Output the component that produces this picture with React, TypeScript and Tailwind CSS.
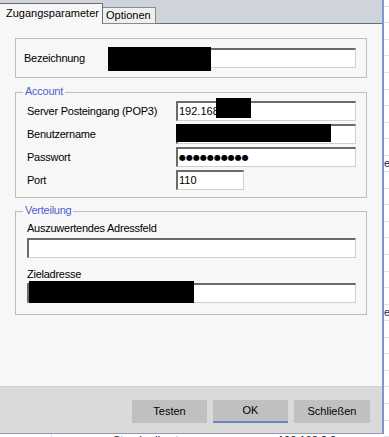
const inputCls =
  'relative flex items-center h-[20px] bg-white border-t-2 border-l-2 border-t-[#6b6b6b] border-l-[#6b6b6b] border-r border-b border-r-[#d4d0c8] border-b-[#d4d0c8] pl-[1px] leading-none tracking-normal';

const Legend = ({ children }: { children: string }) => (
  <div className="absolute left-[7px] -top-[8px] px-[2px] bg-[#f7f7f7] text-[#4c5fd0] leading-[13px]">
    {children}
  </div>
);

const Row = ({ label, children }: { label: string; children: React.ReactNode }) => (
  <div className="flex items-center h-[20px]">
    <div className="w-[149px]">{label}</div>
    {children}
  </div>
);

export default function App() {
  // horizontal lines of the grid behind the dialog
  const gridRows = Array.from({ length: 26 }, (_, i) => i);

  return (
    <div className="flex w-[389px] h-[437px] bg-white overflow-hidden font-['Liberation_Sans',Arial,sans-serif] text-[11px] text-black">
      <div className="flex flex-col w-[384px] h-full shrink-0">
        <div className="flex flex-col h-[434px] border-r-2 border-b border-r-[#7d97cc] border-b-[#8e9bb5]">
          {/* tabs */}
          <div className="flex items-end h-[24px] bg-[#cfd3db]">
            <div className="flex items-center h-[21px] w-[103px] pl-[6px] pb-[1px] border-t border-r border-[#6d6d6d] bg-[#f7f7f7]">
              Zugangsparameter
            </div>
            <div className="flex items-center h-[17px] w-[53px] pl-[3px] border-t border-r border-b border-[#8a8a8a] bg-[#f0f0f0]">
              Optionen
            </div>
            <div className="flex-1 h-px bg-[#6d6d6d]" />
          </div>

          {/* page */}
          <div className="flex-1 bg-[#f7f7f7] px-[15px] pt-[14px] tracking-[-0.25px]">
            <div className="flex items-center h-[40px] pl-[8px] border border-[#bdbdbd]">
              <div className="w-[84px]">Bezeichnung</div>
              <div className={`${inputCls} w-[248px]`}>
                <div className="absolute -left-[2px] -top-[3px] w-[103px] h-[24px] bg-black" />
              </div>
            </div>

            <div className="relative mt-[14px] flex flex-col gap-[3px] pt-[8px] pb-[7px] pl-[11px] border border-[#bdbdbd]">
              <Legend>Account</Legend>
              <Row label="Server Posteingang (POP3)">
                <div className={`${inputCls} w-[180px]`}>
                  192.168
                  <div className="absolute left-[38px] -top-[5px] w-[35px] h-[20px] bg-black" />
                </div>
              </Row>
              <Row label="Benutzername">
                <div className={`${inputCls} w-[180px]`}>
                  <div className="absolute -left-[2px] -top-[2px] w-[155px] h-[18px] bg-black" />
                </div>
              </Row>
              <Row label="Passwort">
                <div className={`${inputCls} w-[180px] font-['DejaVu_Sans',sans-serif] text-[8px]`}>
                  ●●●●●●●●●●
                </div>
              </Row>
              <Row label="Port">
                <div className={`${inputCls} w-[68px]`}>110</div>
              </Row>
            </div>

            <div className="relative mt-[13px] flex flex-col pt-[10px] pb-[11px] pl-[11px] border border-[#bdbdbd]">
              <Legend>Verteilung</Legend>
              <div className="leading-[13px] mb-[3px]">Auszuwertendes Adressfeld</div>
              <div className={`${inputCls} w-[329px]`} />
              <div className="leading-[13px] mt-[10px] mb-[2px]">Zieladresse</div>
              <div className={`${inputCls} w-[329px]`}>
                <div className="absolute left-0 -top-[4px] w-[165px] h-[22px] bg-black" />
              </div>
            </div>
          </div>

          {/* buttons */}
          <div className="flex justify-end gap-[6px] h-[47px] pt-[13px] pr-[12px] bg-[#dadada] border-t border-[#cfd0d6]">
            <button className="flex items-center justify-center w-[75px] h-[23px] bg-[#c0c0c0]">Testen</button>
            <button className="flex items-center justify-center w-[75px] h-[23px] bg-[#c0c0c0] border-b-2 border-[#6a86bd]">
              OK
            </button>
            <button className="flex items-center justify-center w-[76px] h-[23px] bg-[#c0c0c0]">Schließen</button>
          </div>
        </div>

        {/* cut-off sheet below the dialog */}
        <div className="flex h-[3px] overflow-hidden leading-[13px] text-[#111]">
          <div className="w-[52px] border-r border-[#dde3ec]" />
          <div className="pl-[61px] w-[225px]">Standardkonto</div>
          <div className="pl-[1px]">192.168.2.2</div>
        </div>
      </div>

      <div className="flex flex-col flex-1">
        <div className="h-[7px] border-b border-[#dde3ec]" />
        {gridRows.map((i) => (
          <div key={i} className="flex items-center h-[17px] border-b border-[#dde3ec] text-[#1b2452] leading-none">
            {i === 9 || i === 18 ? 'er' : ''}
          </div>
        ))}
      </div>
    </div>
  );
}
